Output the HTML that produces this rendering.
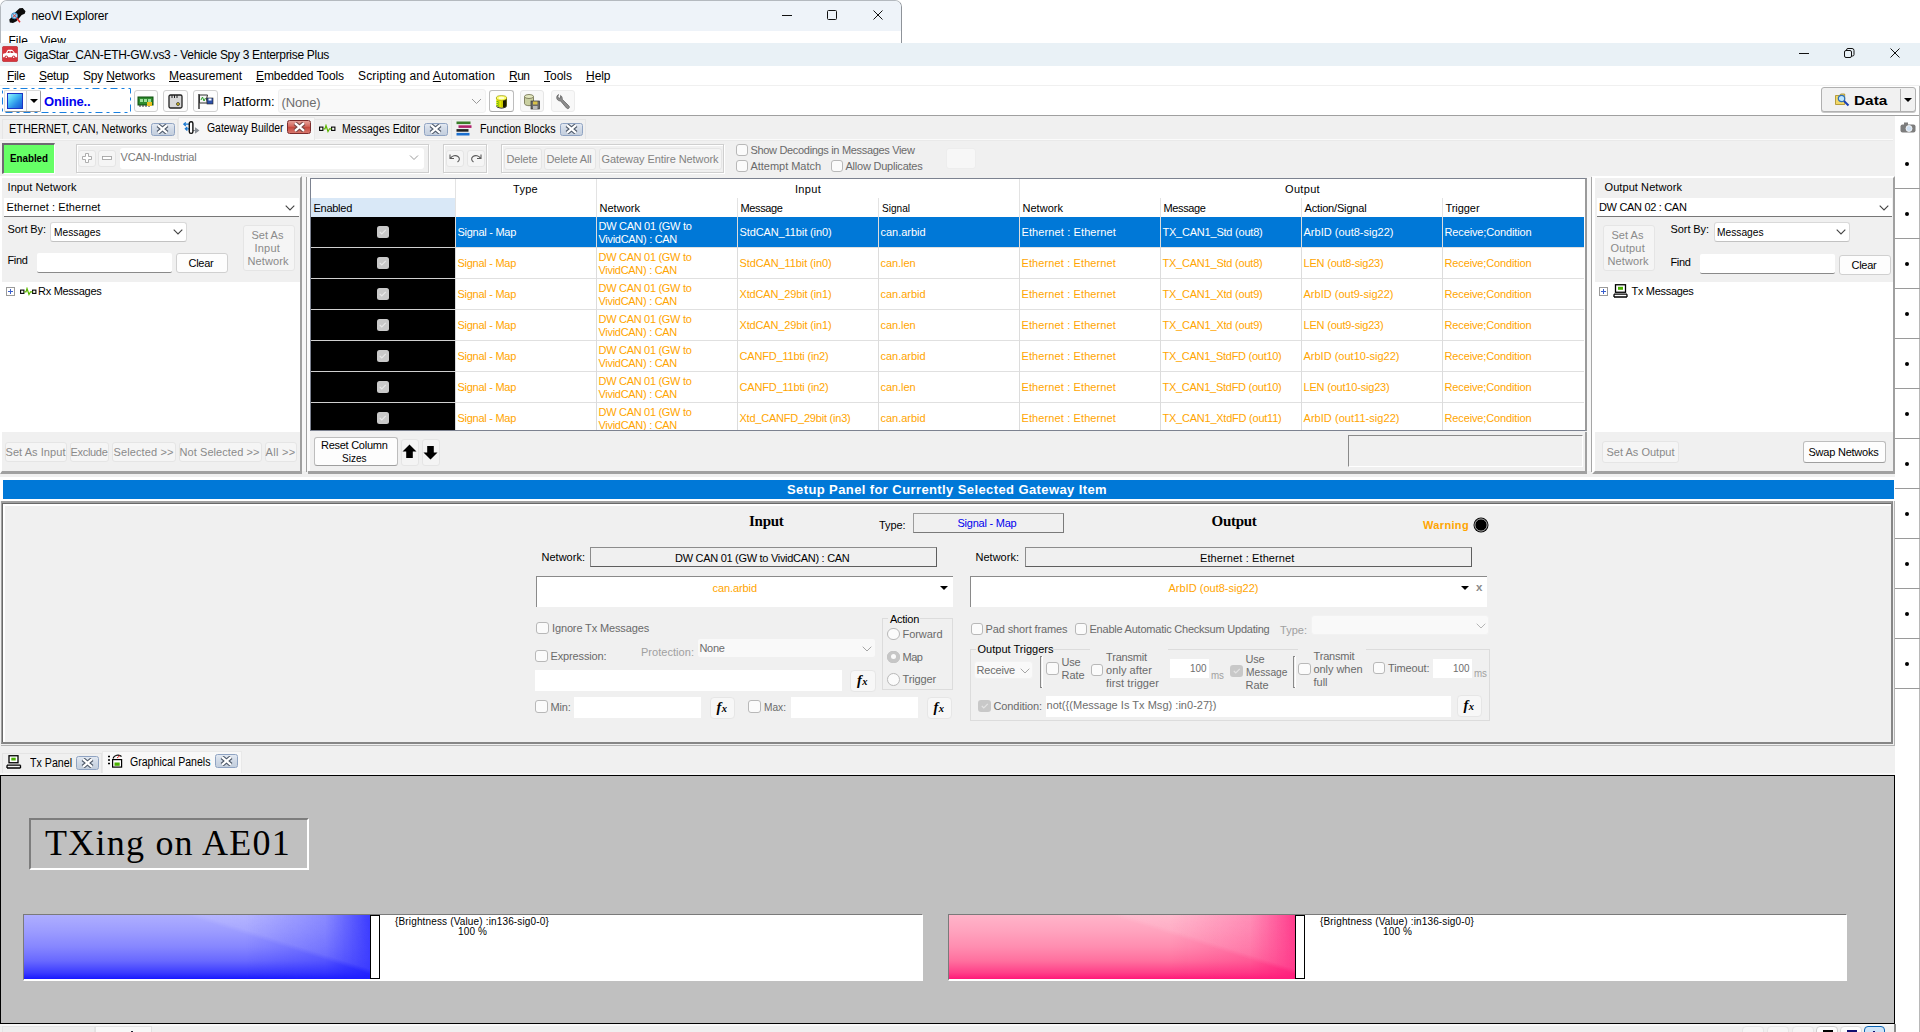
<!DOCTYPE html><html><head><meta charset="utf-8"><title>Vehicle Spy</title><style>
*{box-sizing:border-box;margin:0;padding:0}
html,body{width:1920px;height:1032px;overflow:hidden;background:#fff;font-family:"Liberation Sans",sans-serif}
body{position:relative;font-family:"Liberation Sans",sans-serif;font-size:11px;color:#000;line-height:13px}
.a{position:absolute}
.t{position:absolute;white-space:nowrap}
.btn{position:absolute;background:#fdfdfd;border:1px solid #d0d0d0;border-radius:3px}
.btnd{position:absolute;background:#f5f5f5;border:1px solid #e5e5e5;border-radius:3px}
.cb{position:absolute;width:13px;height:13px;border:1px solid #b8b8b8;border-radius:3px;background:#fbfbfb}
.cbk{position:absolute;width:13px;height:13px;border-radius:3px;background:#c8c8c8}
.rad{position:absolute;width:13px;height:13px;border:1px solid #b8b8b8;border-radius:50%;background:#fbfbfb}
.chev{position:absolute;width:7px;height:7px;border-right:1px solid #444;border-bottom:1px solid #444;transform:rotate(45deg) scale(1,1)}
</style></head><body>
<div class="a" style="left:0;top:0;width:902px;height:50px;background:#fff;border:1px solid #b4b9bf;border-right-color:#8e9399;border-radius:7px 7px 0 0;overflow:hidden"><div class="a" style="left:0;top:0;width:902px;height:30px;background:#eef3f9"></div></div>
<div class="t" style="left:31.5px;top:9px;font-size:12px;line-height:14px;letter-spacing:-0.206px;">neoVI Explorer</div>
<div class="a" style="left:1px;top:31px;width:899px;height:12px;overflow:hidden">
<div class="t" style="left:7.5px;top:3px;font-size:12px;line-height:14px;">File</div>
<div class="t" style="left:39px;top:3px;font-size:12px;line-height:14px;">View</div>
</div>
<svg class="a" style="left:9px;top:7.5px" width="17" height="16" viewBox="0 0 17 16"><path d="M10.5 0.3l3.2-0.3 2.8 3.2-0.8 2.5-3 1.2-5.2 6.3-3.5 1.8-3.2-0.5-0.5-3 3.7-3.5 2-3.5z" fill="#0c0c0c"/><circle cx="5.5" cy="7.8" r="3" fill="#8fd8f6" stroke="#2c86c8" stroke-width="0.9"/><path d="M3.8 6.2l3.4 3.2M7.2 6.2l-3.4 3.2" stroke="#e42a2a" stroke-width="0.9"/><path d="M7.6 10l3.4 4.2" stroke="#e42a2a" stroke-width="1.5"/></svg>
<svg class="a" style="left:770px;top:5px" width="125" height="22" viewBox="0 0 125 22" fill="none" stroke="#111" stroke-width="1"><path d="M12 10.5h10"/><rect x="57.5" y="5.5" width="9" height="9" rx="1"/><path d="M103.5 5.5l9 9M112.5 5.5l-9 9"/></svg>
<div class="a" style="left:0px;top:43px;width:1920px;height:23px;background:#e9f1f6"></div>
<div class="t" style="left:24px;top:48px;font-size:12px;line-height:14px;letter-spacing:-0.299px;">GigaStar_CAN-ETH-GW.vs3 - Vehicle Spy 3 Enterprise Plus</div>
<svg class="a" style="left:2px;top:46px" width="16" height="16" viewBox="0 0 16 16"><rect x="0.3" y="0.3" width="15.4" height="15.4" rx="1.8" fill="#d8353d" stroke="#b02a30" stroke-width="0.6"/><path d="M1 11.3V8.6c0-0.6 0.4-1 1-1.1l2-0.4 1.3-2.6c0.2-0.5 0.6-0.7 1.1-0.7h3.3c0.5 0 0.9 0.2 1.2 0.6l2 2.5 1.4 0.4c0.5 0.1 0.8 0.5 0.8 1v3z" fill="#fff"/><path d="M5.3 7l0.9-1.9h1.5V7zM8.5 5.1h1.7L11.7 7H8.5z" fill="#c4343b"/><circle cx="4.3" cy="11.3" r="1.7" fill="#c4343b"/><circle cx="4.3" cy="11.3" r="0.8" fill="#fff"/><circle cx="11.7" cy="11.3" r="1.7" fill="#c4343b"/><circle cx="11.7" cy="11.3" r="0.8" fill="#fff"/></svg>
<svg class="a" style="left:1790px;top:44px" width="125" height="20" viewBox="0 0 125 20" fill="none" stroke="#111" stroke-width="1"><path d="M9 9.5h10"/><rect x="54.5" y="6.5" width="7" height="7" rx="1.5"/><path d="M56.5 6.3v-0.3a1.5 1.5 0 0 1 1.5-1.5h4a2 2 0 0 1 2 2v4a1.5 1.5 0 0 1-1.5 1.5h-0.8"/><path d="M100.5 4.5l9 9M109.5 4.5l-9 9"/></svg>
<div class="a" style="left:0px;top:66px;width:1920px;height:20px;background:#fff"></div>
<div class="a" style="left:0px;top:85px;width:1920px;height:1px;background:#f0f0f0"></div>
<div class="t" style="left:7px;top:69px;font-size:12px;line-height:14px;letter-spacing:-0.334px;"><u>F</u>ile</div>
<div class="t" style="left:39px;top:69px;font-size:12px;line-height:14px;letter-spacing:-0.372px;"><u>S</u>etup</div>
<div class="t" style="left:83px;top:69px;font-size:12px;line-height:14px;letter-spacing:-0.168px;">Spy <u>N</u>etworks</div>
<div class="t" style="left:169px;top:69px;font-size:12px;line-height:14px;letter-spacing:-0.033px;"><u>M</u>easurement</div>
<div class="t" style="left:256px;top:69px;font-size:12px;line-height:14px;letter-spacing:-0.084px;"><u>E</u>mbedded Tools</div>
<div class="t" style="left:358px;top:69px;font-size:12px;line-height:14px;letter-spacing:0.149px;">Scripting and <u>A</u>utomation</div>
<div class="t" style="left:509px;top:69px;font-size:12px;line-height:14px;letter-spacing:-0.505px;"><u>R</u>un</div>
<div class="t" style="left:544px;top:69px;font-size:12px;line-height:14px;letter-spacing:-0.003px;"><u>T</u>ools</div>
<div class="t" style="left:586px;top:69px;font-size:12px;line-height:14px;letter-spacing:-0.045px;"><u>H</u>elp</div>
<div class="a" style="left:0px;top:86px;width:1920px;height:29px;background:#fff"></div>
<div class="a" style="left:0px;top:115px;width:1920px;height:1px;background:#a0a0a0"></div>
<svg class="a" style="left:2px;top:88px" width="129" height="25" viewBox="0 0 129 25"><rect x="0.5" y="0.5" width="128" height="24" fill="none" stroke="#1880e0" stroke-width="1" stroke-dasharray="7 4 3 4"/></svg>
<div class="a" style="left:3.5px;top:89.5px;width:37.5px;height:22px;border:1px solid #d9d9d9;border-right-color:#9a9a9a;border-bottom-color:#9a9a9a;border-radius:2px;background:#fdfdfd"></div>
<div class="a" style="left:7px;top:93px;width:16px;height:15.5px;background:linear-gradient(135deg,#9af0ff 0%,#4cc4f4 35%,#2a8be8 65%,#1858d8 100%);border:1.5px solid #1a35c4"></div>
<div class="a" style="left:26px;top:91px;width:1px;height:20px;background:#d0d0d0"></div>
<div class="a" style="left:30px;top:99px;width:0;height:0;border-left:4px solid transparent;border-right:4px solid transparent;border-top:4px solid #000"></div>
<div class="t" style="left:44px;top:94px;font-size:13px;line-height:15px;font-weight:bold;color:#0000f0;letter-spacing:-0.146px;">Online..</div>
<div class="btn" style="left:133.5px;top:90px;width:24.5px;height:22px;"></div>
<div class="btn" style="left:163px;top:90px;width:24.5px;height:22px;"></div>
<div class="btn" style="left:193px;top:90px;width:24.5px;height:22px;"></div>
<svg class="a" style="left:137px;top:95px" width="18" height="13" viewBox="0 0 18 13"><rect x="1" y="2" width="15" height="8" fill="#2e8b2e" stroke="#0b4d0b"/><path d="M3 4h3v3H3zM7 4h3v3H7zM11 4h3v3h-3z" fill="#9be09b"/><path d="M3 10v2M6 10v2M9 10v2M12 10v2" stroke="#333"/><rect x="10" y="7" width="5" height="4" fill="#e8c020"/></svg>
<svg class="a" style="left:168px;top:94px" width="15" height="15" viewBox="0 0 15 15"><rect x="1" y="1" width="13" height="13" rx="1.5" fill="#d9d9d9" stroke="#222" stroke-width="1.3"/><path d="M4 1v3M6.5 1v3M9 1v3" stroke="#222"/><circle cx="10" cy="10" r="1.5" fill="#d8c020" stroke="#222" stroke-width="0.7"/></svg>
<svg class="a" style="left:197px;top:93px" width="18" height="17" viewBox="0 0 18 17"><path d="M2 1v15" stroke="#333" stroke-width="1.5"/><path d="M2.5 2h8l-1 4 1 4h-8z" fill="#f4f4f4" stroke="#333"/><path d="M4 7l1.5-3 1.5 4 1.5-3" stroke="#2a9d2a" fill="none"/><rect x="10" y="5" width="6" height="6" fill="#2b4fa8" stroke="#222" stroke-width="0.6"/><rect x="11.5" y="5.5" width="3" height="2" fill="#fff"/></svg>
<div class="t" style="left:223px;top:94px;font-size:13px;line-height:15px;letter-spacing:-0.057px;">Platform:</div>
<div class="a" style="left:277.5px;top:89px;width:208px;height:24px;background:#f9f9f9;border:1px solid #f0f0f0;border-radius:3px"></div>
<div class="t" style="left:281.5px;top:95px;font-size:13px;line-height:15px;color:#6d6d6d;letter-spacing:-0.123px;">(None)</div>
<svg class="a" style="left:471px;top:98px" width="11" height="7" viewBox="0 0 11 7"><path d="M1 1l4.5 4.5L10 1" fill="none" stroke="#9a9a9a" stroke-width="1"/></svg>
<div class="btn" style="left:489px;top:90px;width:24.5px;height:22px;border-color:#bdbdbd;border-bottom-color:#a8a8a8"></div>
<div class="btn" style="left:519.5px;top:90px;width:24px;height:22px;border-color:#e6e6e6;background:#f8f8f8"></div>
<div class="btn" style="left:550.5px;top:90px;width:24px;height:22px;border-color:#ececec;background:#f8f8f8"></div>
<svg class="a" style="left:494px;top:94px" width="15" height="15" viewBox="0 0 15 15"><path d="M2.3 4v7c0 1.5 2.3 2.7 5.2 2.7s5.2-1.2 5.2-2.7V4z" fill="#e6e600"/><path d="M9 5.5v8.1c2.2-0.3 3.7-1.3 3.7-2.6V4.5z" fill="#1a1a00"/><path d="M7.5 13.7c-2.9 0-5.2-1.2-5.2-2.7v1c0 1.5 2.3 2.5 5.2 2.5s5.2-1 5.2-2.5v-1c0 1.5-2.3 2.7-5.2 2.7z" fill="#000"/><ellipse cx="7.5" cy="4" rx="5.2" ry="2.4" fill="#ffff66" stroke="#8a8a00" stroke-width="0.6"/><ellipse cx="7.5" cy="4" rx="3" ry="1.2" fill="#ffffd0"/><path d="M3.2 7v5M4.7 7.6v5.2" stroke="#1c9a1c" stroke-width="0.9" stroke-dasharray="1 1"/><path d="M8 7.5v5.5" stroke="#6a6a00" stroke-width="0.8" stroke-dasharray="1 1"/></svg>
<svg class="a" style="left:523px;top:93px" width="18" height="17" viewBox="0 0 18 17"><path d="M1.5 3.5v7c0 1.2 2 2.2 4.5 2.2s4.5-1 4.5-2.2v-7" fill="#c9cfa0" stroke="#6b6b4a" stroke-width="0.8"/><ellipse cx="6" cy="3.5" rx="4.5" ry="2" fill="#e4e8c0" stroke="#6b6b4a" stroke-width="0.8"/><rect x="8" y="8" width="8.5" height="8" fill="#6a6a6a" stroke="#333" stroke-width="0.7"/><rect x="10" y="8.5" width="4.5" height="3" fill="#d9c24a"/><rect x="10" y="13" width="4.5" height="3" fill="#bbb"/></svg>
<svg class="a" style="left:555px;top:93px" width="16" height="17" viewBox="0 0 16 17"><path d="M3.5 1.5c-1.5 0.8-2.2 2.6-1.6 4.3 0.6 1.5 2.1 2.3 3.6 2.1l6 7.1c0.7 0.8 1.8 0.8 2.4 0.2 0.7-0.7 0.6-1.7-0.1-2.4L7.2 6.3c0.3-1.4-0.3-3-1.6-3.9L5.5 5 3.6 5.3 2.9 3.6z" fill="#8d8d8d" stroke="#5a5a5a" stroke-width="0.7"/></svg>
<div class="a" style="left:1820.6px;top:87px;width:95.8px;height:24.8px;background:#f1f1f1;border:1px solid #b0b0b0;border-radius:3px;box-shadow:0 1px 0 #c8c8c8"></div>
<div class="a" style="left:1900px;top:88.5px;width:1px;height:22.5px;background:#b0b0b0"></div>
<div class="t" style="left:1854.2px;top:92.6px;font-size:13px;line-height:15px;font-weight:bold;transform:scaleX(1.1818);transform-origin:0 0;">Data</div>
<div class="a" style="left:1904px;top:98px;width:0;height:0;border-left:4px solid transparent;border-right:4px solid transparent;border-top:4px solid #000"></div>
<svg class="a" style="left:1835px;top:92.3px" width="16" height="15" viewBox="0 0 16 15"><path d="M0.5 3.5h4l1.2-1.5h4v10.5h-9.2z" fill="#f2d86a" stroke="#a88a20" stroke-width="0.8"/><circle cx="6.5" cy="6.5" r="3.2" fill="#bfe6ff" stroke="#2f6fb5" stroke-width="1.2"/><path d="M9 9l4.5 4.5" stroke="#1a3fb0" stroke-width="2"/></svg>
<div class="a" style="left:0px;top:116px;width:1895px;height:916px;background:#f0f0f0"></div>
<div class="a" style="left:1895px;top:116px;width:25px;height:916px;background:#fff"></div>
<div class="a" style="left:1919px;top:86px;width:1px;height:946px;background:#b8b8b8"></div>
<div class="a" style="left:0px;top:139px;width:1893px;height:1px;background:#fbfbfb"></div>
<div class="a" style="left:2px;top:119px;width:176px;height:20px;background:#f0f0f0;border:1px solid #e6e6e6;border-bottom:none"></div>
<div class="a" style="left:178px;top:117px;width:137px;height:23px;background:#f7f7f7;border:1px solid #e9e9e9;border-bottom:none"></div>
<div class="a" style="left:315px;top:119px;width:137px;height:20px;background:#f0f0f0;border:1px solid #e6e6e6;border-bottom:none;border-left:none"></div>
<div class="a" style="left:452px;top:119px;width:134px;height:20px;background:#f0f0f0;border:1px solid #e6e6e6;border-bottom:none;border-left:none"></div>
<div class="t" style="left:9px;top:121.5px;font-size:12.5px;line-height:14.5px;transform:scaleX(0.8715);transform-origin:0 0;">ETHERNET, CAN, Networks</div>
<div class="a" style="left:151px;top:122.5px;width:23.5px;height:13px;background:linear-gradient(#e2e8f1 0%,#d0d9e6 50%,#c3cedd 100%);border:1px solid #8fa3c2;border-radius:2.5px"></div>
<svg class="a" style="left:156.25px;top:124px" width="13" height="10" viewBox="0 0 13 10"><path d="M2 1.2l9 7.6M11 1.2l-9 7.6" stroke="#4f5a6a" stroke-width="4.4"/><path d="M2 1.2l9 7.6M11 1.2l-9 7.6" stroke="#fff" stroke-width="2.2"/></svg>
<div class="t" style="left:206.5px;top:120.5px;font-size:12.5px;line-height:14.5px;transform:scaleX(0.8341);transform-origin:0 0;">Gateway Builder</div>
<div class="a" style="left:287px;top:120px;width:24px;height:13.5px;background:linear-gradient(#e6a098 0%,#d4675c 45%,#c4463a 50%,#d8766c 100%);border:1px solid #7c2c2c;border-radius:2.5px"></div>
<svg class="a" style="left:292.5px;top:121.75px" width="13" height="10" viewBox="0 0 13 10"><path d="M2 1.2l9 7.6M11 1.2l-9 7.6" stroke="#7a4a48" stroke-width="4.4"/><path d="M2 1.2l9 7.6M11 1.2l-9 7.6" stroke="#fff" stroke-width="2.2"/></svg>
<div class="t" style="left:342px;top:121.5px;font-size:12.5px;line-height:14.5px;transform:scaleX(0.8378);transform-origin:0 0;">Messages Editor</div>
<div class="a" style="left:424px;top:122.5px;width:23.5px;height:13px;background:linear-gradient(#e2e8f1 0%,#d0d9e6 50%,#c3cedd 100%);border:1px solid #8fa3c2;border-radius:2.5px"></div>
<svg class="a" style="left:429.25px;top:124px" width="13" height="10" viewBox="0 0 13 10"><path d="M2 1.2l9 7.6M11 1.2l-9 7.6" stroke="#4f5a6a" stroke-width="4.4"/><path d="M2 1.2l9 7.6M11 1.2l-9 7.6" stroke="#fff" stroke-width="2.2"/></svg>
<div class="t" style="left:479.5px;top:121.5px;font-size:12.5px;line-height:14.5px;transform:scaleX(0.8557);transform-origin:0 0;">Function Blocks</div>
<div class="a" style="left:559.5px;top:122.5px;width:23px;height:13px;background:linear-gradient(#e2e8f1 0%,#d0d9e6 50%,#c3cedd 100%);border:1px solid #8fa3c2;border-radius:2.5px"></div>
<svg class="a" style="left:564.5px;top:124px" width="13" height="10" viewBox="0 0 13 10"><path d="M2 1.2l9 7.6M11 1.2l-9 7.6" stroke="#4f5a6a" stroke-width="4.4"/><path d="M2 1.2l9 7.6M11 1.2l-9 7.6" stroke="#fff" stroke-width="2.2"/></svg>
<svg class="a" style="left:183px;top:120.5px" width="17" height="14" viewBox="0 0 17 14"><path d="M0.8 3.2h5.5M2.8 1.4l-2 1.8 2 1.8" stroke="#1a78d0" stroke-width="1.2" fill="none"/><path d="M2.3 7.8h4M4.3 6l-2 1.8 2 1.8" stroke="#1a78d0" stroke-width="1.2" fill="none"/><path d="M10 9.5h5M12.5 7.3l3 2.2-3 2.2z" stroke="#8a8f96" stroke-width="1.1" fill="#8a8f96"/><rect x="6.3" y="0.8" width="3.6" height="11.6" rx="1.7" fill="#fff" stroke="#111" stroke-width="1.4"/></svg>
<svg class="a" style="left:318.5px;top:123.5px" width="17" height="9" viewBox="0 0 17 9"><rect x="0.6" y="3.1" width="3.3" height="3.3" fill="#fff" stroke="#000" stroke-width="1.1"/><rect x="12.6" y="3.1" width="3.3" height="3.3" fill="#fff" stroke="#000" stroke-width="1.1"/><path d="M4.3 4.8h1.7l1-3.3 2 6 1.5-2.7h2" fill="none" stroke="#5cb800" stroke-width="1.2"/></svg>
<svg class="a" style="left:456px;top:121px" width="16" height="15" viewBox="0 0 16 15"><rect x="0.5" y="0.5" width="14" height="2.6" fill="#3b7d2a"/><rect x="2.5" y="4.3" width="13" height="2.6" fill="#b0206a"/><rect x="0.5" y="8.1" width="12" height="2.6" fill="#222"/><rect x="0.5" y="11.9" width="13" height="2.6" fill="#1a6fd0"/></svg>
<svg class="a" style="left:1900px;top:122px" width="16" height="11" viewBox="0 0 16 11"><rect x="0.5" y="2.5" width="15" height="8" rx="2" fill="#7d7d7d"/><rect x="4" y="0.5" width="4" height="3" fill="#7d7d7d"/><circle cx="9" cy="6.5" r="3" fill="#cfe0f2" stroke="#fff" stroke-width="0.8"/></svg>
<div class="a" style="left:0px;top:140px;width:1893px;height:1px;background:#e9e9e9"></div>
<div class="a" style="left:2.2px;top:143px;width:52.4px;height:30.8px;background:#66ff66;border-style:solid;border-color:#6e6a72 #fff #fff #6e6a72;border-width:2px 1.5px 1.5px 2px"></div>
<div class="t" style="left:9.5px;top:152px;font-weight:bold;transform:scaleX(0.8881);transform-origin:0 0;">Enabled</div>
<div class="a" style="left:75.5px;top:143.5px;width:353px;height:29.5px;border:1px solid #cfcfcf;box-shadow:inset 1px 1px 0 #fff, 1px 1px 0 #fff"></div>
<div class="btnd" style="left:78px;top:150px;width:17.5px;height:16.5px;"></div>
<div class="btnd" style="left:98px;top:150px;width:17.5px;height:16.5px;"></div>
<svg class="a" style="left:82px;top:153px" width="10" height="10" viewBox="0 0 10 10"><path d="M3.5 0.5h3v3h3v3h-3v3h-3v-3h-3v-3h3z" fill="#fff" stroke="#a5a5a5" stroke-width="0.9"/></svg>
<svg class="a" style="left:102px;top:156px" width="10" height="4" viewBox="0 0 10 4"><rect x="0.5" y="0.5" width="9" height="3" fill="#fff" stroke="#a5a5a5" stroke-width="0.9"/></svg>
<div class="a" style="left:120px;top:148px;width:304px;height:21px;background:#fff;border-radius:3px"></div>
<div class="t" style="left:120.5px;top:151px;color:#7a7a7a;letter-spacing:-0.191px;">VCAN-Industrial</div>
<svg class="a" style="left:409px;top:155px" width="10" height="6" viewBox="0 0 10 6"><path d="M1 0.5l4 4 4-4" fill="none" stroke="#9a9a9a"/></svg>
<div class="a" style="left:443px;top:143.5px;width:44px;height:29.5px;border:1px solid #cfcfcf;box-shadow:inset 1px 1px 0 #fff, 1px 1px 0 #fff"></div>
<div class="btnd" style="left:445.5px;top:150px;width:18.5px;height:16.5px;"></div>
<div class="btnd" style="left:466.5px;top:150px;width:18.5px;height:16.5px;"></div>
<svg class="a" style="left:449px;top:153px" width="12" height="10" viewBox="0 0 12 10"><path d="M1 1.5v4h4M1.5 5.3C3 2.8 6.5 1.8 9 3.5c2 1.5 1.8 4-0.5 5.5" fill="none" stroke="#5a5a5a" stroke-width="1.1"/></svg>
<svg class="a" style="left:470px;top:153px" width="12" height="10" viewBox="0 0 12 10"><path d="M11 1.5v4H7M10.5 5.3C9 2.8 5.5 1.8 3 3.5c-2 1.5-1.8 4 0.5 5.5" fill="none" stroke="#5a5a5a" stroke-width="1.1"/></svg>
<div class="a" style="left:501px;top:143.5px;width:223px;height:29.5px;border:1px solid #cfcfcf;box-shadow:inset 1px 1px 0 #fff, 1px 1px 0 #fff"></div>
<div class="btnd" style="left:503.5px;top:148px;width:38px;height:21.5px;"></div>
<div class="t" style="left:506.5px;top:152.5px;color:#838383;letter-spacing:-0.133px;">Delete</div>
<div class="btnd" style="left:543.5px;top:148px;width:52px;height:21.5px;"></div>
<div class="t" style="left:546.5px;top:152.5px;color:#838383;letter-spacing:-0.147px;">Delete All</div>
<div class="btnd" style="left:598.5px;top:148px;width:123px;height:21.5px;"></div>
<div class="t" style="left:601.5px;top:152.5px;color:#838383;letter-spacing:-0.073px;">Gateway Entire Network</div>
<div class="cb" style="left:735.5px;top:144px;width:12.5px;height:12px;"></div>
<div class="t" style="left:750.5px;top:143.5px;color:#6a6a6a;letter-spacing:-0.324px;">Show Decodings in Messages View</div>
<div class="cb" style="left:735.5px;top:160px;width:12.5px;height:12px;"></div>
<div class="t" style="left:750.5px;top:159.5px;color:#6a6a6a;letter-spacing:-0.032px;">Attempt Match</div>
<div class="cb" style="left:830.5px;top:160px;width:12.5px;height:12px;"></div>
<div class="t" style="left:845.5px;top:159.5px;color:#6a6a6a;letter-spacing:-0.231px;">Allow Duplicates</div>
<div class="a" style="left:946px;top:147.5px;width:29.5px;height:21.5px;background:#f7f7f7;border:1px solid #ededed;border-radius:3px"></div>
<div class="a" style="left:0px;top:176px;width:302px;height:298px;background:#f0f0f0;border-style:solid;border-color:#fff #a0a0a0 #a0a0a0 #fff;border-width:2px 2px 3px 2px"></div>
<div class="a" style="left:302px;top:177px;width:3.5px;height:294px;background:#f7f7f7"></div>
<div class="a" style="left:305.5px;top:177px;width:1.3px;height:295px;background:#a0a0a0"></div>
<div class="a" style="left:306.8px;top:177px;width:3.2px;height:294px;background:#fbfbfb"></div>
<div class="t" style="left:7.5px;top:181px;letter-spacing:0.087px;">Input Network</div>
<div class="a" style="left:4px;top:197.5px;width:295px;height:19.5px;background:#fff;border-bottom:1px solid #777"></div>
<div class="t" style="left:6.5px;top:201px;letter-spacing:0.088px;">Ethernet : Ethernet</div>
<svg class="a" style="left:285px;top:204.5px" width="10" height="6" viewBox="0 0 10 6"><path d="M0.7 0.7l4.3 4.3 4.3-4.3" fill="none" stroke="#444" stroke-width="1.1"/></svg>
<div class="t" style="left:7.5px;top:223px;letter-spacing:-0.078px;">Sort By:</div>
<div class="a" style="left:50px;top:221.5px;width:136.5px;height:20.5px;background:#fff;border:1px solid #d9d9d9;border-bottom-color:#c2c2c2;border-radius:3px"></div>
<div class="t" style="left:53.5px;top:225.5px;transform:scaleX(0.9275);transform-origin:0 0;">Messages</div>
<svg class="a" style="left:173px;top:228.5px" width="10" height="6" viewBox="0 0 10 6"><path d="M0.7 0.7l4.3 4.3 4.3-4.3" fill="none" stroke="#444" stroke-width="1.1"/></svg>
<div class="btnd" style="left:243px;top:225px;width:51.5px;height:46px;"></div>
<div class="t" style="left:251.5px;top:229px;color:#8a8a8a;letter-spacing:0.034px;">Set As</div>
<div class="t" style="left:254.5px;top:242px;color:#8a8a8a;letter-spacing:0.207px;">Input</div>
<div class="t" style="left:247.5px;top:255px;color:#8a8a8a;letter-spacing:0.094px;">Network</div>
<div class="t" style="left:7.5px;top:254px;letter-spacing:-0.35px;">Find</div>
<div class="a" style="left:37px;top:252.5px;width:135px;height:20px;background:#fff;border-bottom:1px solid #8a8a8a;border-radius:2px"></div>
<div class="btn" style="left:176px;top:253px;width:51.5px;height:19.5px;"></div>
<div class="t" style="left:188.5px;top:256.5px;letter-spacing:-0.257px;">Clear</div>
<div class="a" style="left:2px;top:282px;width:298px;height:150px;background:#fff"></div>
<svg class="a" style="left:6px;top:286.5px" width="9" height="9" viewBox="0 0 9 9"><rect x="0.5" y="0.5" width="8" height="8" fill="#fff" stroke="#9a9a9a"/><path d="M2 4.5h5M4.5 2v5" stroke="#3a5fcd" stroke-width="1"/></svg>
<svg class="a" style="left:20px;top:287px" width="17" height="9" viewBox="0 0 17 9"><rect x="0.6" y="3.1" width="3.3" height="3.3" fill="#fff" stroke="#000" stroke-width="1.1"/><rect x="12.6" y="3.1" width="3.3" height="3.3" fill="#fff" stroke="#000" stroke-width="1.1"/><path d="M4.3 4.8h1.7l1-3.3 2 6 1.5-2.7h2" fill="none" stroke="#5cb800" stroke-width="1.2"/></svg>
<div class="t" style="left:38px;top:285px;letter-spacing:-0.285px;">Rx Messages</div>
<div class="btnd" style="left:5px;top:442px;width:62px;height:20px;"></div>
<div class="t" style="left:5.5px;top:445.5px;color:#8a8a8a;letter-spacing:0.057px;">Set As Input</div>
<div class="btnd" style="left:70px;top:442px;width:39px;height:20px;"></div>
<div class="t" style="left:70.5px;top:445.5px;color:#8a8a8a;letter-spacing:-0.305px;">Exclude</div>
<div class="btnd" style="left:112px;top:442px;width:64px;height:20px;"></div>
<div class="t" style="left:113.5px;top:445.5px;color:#8a8a8a;letter-spacing:0.117px;">Selected &gt;&gt;</div>
<div class="btnd" style="left:179px;top:442px;width:82.5px;height:20px;"></div>
<div class="t" style="left:179.5px;top:445.5px;color:#8a8a8a;letter-spacing:0.074px;">Not Selected &gt;&gt;</div>
<div class="btnd" style="left:265px;top:442px;width:31.5px;height:20px;"></div>
<div class="t" style="left:265.5px;top:445.5px;color:#8a8a8a;letter-spacing:0.312px;">All &gt;&gt;</div>
<div class="a" style="left:310px;top:178px;width:1277px;height:253px;background:#fff;border:1px solid #7c8290;border-right:2px solid #9a9a9a"></div>
<div class="a" style="left:308px;top:432px;width:1279px;height:42px;border-right:2px solid #a0a0a0;border-bottom:3px solid #a0a0a0"></div>
<div class="a" style="left:311px;top:198px;width:144.5px;height:19px;background:#d9e8f7"></div>
<div class="t" style="left:313.5px;top:201.5px;letter-spacing:-0.267px;">Enabled</div>
<div class="t" style="left:513px;top:182.5px;letter-spacing:0.288px;">Type</div>
<div class="t" style="left:795px;top:182.5px;letter-spacing:0.307px;">Input</div>
<div class="t" style="left:1285px;top:182.5px;letter-spacing:0.33px;">Output</div>
<div class="t" style="left:599.5px;top:201.5px;letter-spacing:0.022px;">Network</div>
<div class="t" style="left:740.5px;top:201.5px;letter-spacing:-0.376px;">Message</div>
<div class="t" style="left:881.5px;top:201.5px;transform:scaleX(0.9157);transform-origin:0 0;">Signal</div>
<div class="t" style="left:1022.5px;top:201.5px;letter-spacing:0.022px;">Network</div>
<div class="t" style="left:1163.5px;top:201.5px;letter-spacing:-0.376px;">Message</div>
<div class="t" style="left:1304.5px;top:201.5px;letter-spacing:-0.17px;">Action/Signal</div>
<div class="t" style="left:1445.5px;top:201.5px;letter-spacing:-0.062px;">Trigger</div>
<div class="a" style="left:455px;top:179px;width:1px;height:38px;background:#e3e3e3"></div>
<div class="a" style="left:596px;top:179px;width:1px;height:38px;background:#e3e3e3"></div>
<div class="a" style="left:1019px;top:179px;width:1px;height:38px;background:#e3e3e3"></div>
<div class="a" style="left:737px;top:198px;width:1px;height:19px;background:#e3e3e3"></div>
<div class="a" style="left:878px;top:198px;width:1px;height:19px;background:#e3e3e3"></div>
<div class="a" style="left:1160px;top:198px;width:1px;height:19px;background:#e3e3e3"></div>
<div class="a" style="left:1301px;top:198px;width:1px;height:19px;background:#e3e3e3"></div>
<div class="a" style="left:1442px;top:198px;width:1px;height:19px;background:#e3e3e3"></div>
<div class="a" style="left:311px;top:217px;width:1273px;height:213px;overflow:hidden">
<div class="a" style="left:0px;top:0px;width:144.5px;height:30px;background:#000"></div>
<div class="a" style="left:65.5px;top:9px;width:12px;height:12px;background:#c9c9c9;border-radius:2.5px"></div>
<svg class="a" style="left:68px;top:12px" width="8" height="6" viewBox="0 0 8 6"><path d="M0.8 3l2 2 4-4.2" fill="none" stroke="#e9e9e9" stroke-width="1.1"/></svg>
<div class="a" style="left:144.5px;top:0px;width:1128px;height:30px;background:#0078d7"></div>
<div class="a" style="left:0px;top:30px;width:144.5px;height:1px;background:#d0d0d0"></div>
<div class="a" style="left:144.5px;top:30px;width:1128.5px;height:1px;background:#e0e0e0"></div>
<div class="t" style="left:146.5px;top:8.5px;color:#fff;letter-spacing:-0.271px;">Signal - Map</div>
<div class="t" style="left:287.5px;top:2.5px;color:#fff;letter-spacing:-0.299px;">DW CAN 01 (GW to</div>
<div class="t" style="left:287.5px;top:15.5px;color:#fff;letter-spacing:-0.295px;">VividCAN) : CAN</div>
<div class="t" style="left:428.5px;top:8.5px;color:#fff;letter-spacing:-0.108px;">StdCAN_11bit (in0)</div>
<div class="t" style="left:569.5px;top:8.5px;color:#fff;letter-spacing:-0.028px;">can.arbid</div>
<div class="t" style="left:710.5px;top:8.5px;color:#fff;letter-spacing:0.114px;">Ethernet : Ethernet</div>
<div class="t" style="left:851.5px;top:8.5px;color:#fff;letter-spacing:-0.219px;">TX_CAN1_Std (out8)</div>
<div class="t" style="left:992.5px;top:8.5px;color:#fff;letter-spacing:0.007px;">ArbID (out8-sig22)</div>
<div class="t" style="left:1133.5px;top:8.5px;color:#fff;letter-spacing:-0.134px;">Receive;Condition</div>
<div class="a" style="left:0px;top:31px;width:144.5px;height:30px;background:#000"></div>
<div class="a" style="left:65.5px;top:40px;width:12px;height:12px;background:#c9c9c9;border-radius:2.5px"></div>
<svg class="a" style="left:68px;top:43px" width="8" height="6" viewBox="0 0 8 6"><path d="M0.8 3l2 2 4-4.2" fill="none" stroke="#e9e9e9" stroke-width="1.1"/></svg>
<div class="a" style="left:0px;top:61px;width:144.5px;height:1px;background:#d0d0d0"></div>
<div class="a" style="left:144.5px;top:61px;width:1128.5px;height:1px;background:#e0e0e0"></div>
<div class="t" style="left:146.5px;top:39.5px;color:#ffa500;letter-spacing:-0.271px;">Signal - Map</div>
<div class="t" style="left:287.5px;top:33.5px;color:#ffa500;letter-spacing:-0.299px;">DW CAN 01 (GW to</div>
<div class="t" style="left:287.5px;top:46.5px;color:#ffa500;letter-spacing:-0.295px;">VividCAN) : CAN</div>
<div class="t" style="left:428.5px;top:39.5px;color:#ffa500;letter-spacing:-0.108px;">StdCAN_11bit (in0)</div>
<div class="t" style="left:569.5px;top:39.5px;color:#ffa500;letter-spacing:-0.067px;">can.len</div>
<div class="t" style="left:710.5px;top:39.5px;color:#ffa500;letter-spacing:0.114px;">Ethernet : Ethernet</div>
<div class="t" style="left:851.5px;top:39.5px;color:#ffa500;letter-spacing:-0.219px;">TX_CAN1_Std (out8)</div>
<div class="t" style="left:992.5px;top:39.5px;color:#ffa500;letter-spacing:-0.197px;">LEN (out8-sig23)</div>
<div class="t" style="left:1133.5px;top:39.5px;color:#ffa500;letter-spacing:-0.134px;">Receive;Condition</div>
<div class="a" style="left:0px;top:62px;width:144.5px;height:30px;background:#000"></div>
<div class="a" style="left:65.5px;top:71px;width:12px;height:12px;background:#c9c9c9;border-radius:2.5px"></div>
<svg class="a" style="left:68px;top:74px" width="8" height="6" viewBox="0 0 8 6"><path d="M0.8 3l2 2 4-4.2" fill="none" stroke="#e9e9e9" stroke-width="1.1"/></svg>
<div class="a" style="left:0px;top:92px;width:144.5px;height:1px;background:#d0d0d0"></div>
<div class="a" style="left:144.5px;top:92px;width:1128.5px;height:1px;background:#e0e0e0"></div>
<div class="t" style="left:146.5px;top:70.5px;color:#ffa500;letter-spacing:-0.271px;">Signal - Map</div>
<div class="t" style="left:287.5px;top:64.5px;color:#ffa500;letter-spacing:-0.299px;">DW CAN 01 (GW to</div>
<div class="t" style="left:287.5px;top:77.5px;color:#ffa500;letter-spacing:-0.295px;">VividCAN) : CAN</div>
<div class="t" style="left:428.5px;top:70.5px;color:#ffa500;letter-spacing:-0.154px;">XtdCAN_29bit (in1)</div>
<div class="t" style="left:569.5px;top:70.5px;color:#ffa500;letter-spacing:-0.028px;">can.arbid</div>
<div class="t" style="left:710.5px;top:70.5px;color:#ffa500;letter-spacing:0.114px;">Ethernet : Ethernet</div>
<div class="t" style="left:851.5px;top:70.5px;color:#ffa500;letter-spacing:-0.219px;">TX_CAN1_Xtd (out9)</div>
<div class="t" style="left:992.5px;top:70.5px;color:#ffa500;letter-spacing:0.007px;">ArbID (out9-sig22)</div>
<div class="t" style="left:1133.5px;top:70.5px;color:#ffa500;letter-spacing:-0.134px;">Receive;Condition</div>
<div class="a" style="left:0px;top:93px;width:144.5px;height:30px;background:#000"></div>
<div class="a" style="left:65.5px;top:102px;width:12px;height:12px;background:#c9c9c9;border-radius:2.5px"></div>
<svg class="a" style="left:68px;top:105px" width="8" height="6" viewBox="0 0 8 6"><path d="M0.8 3l2 2 4-4.2" fill="none" stroke="#e9e9e9" stroke-width="1.1"/></svg>
<div class="a" style="left:0px;top:123px;width:144.5px;height:1px;background:#d0d0d0"></div>
<div class="a" style="left:144.5px;top:123px;width:1128.5px;height:1px;background:#e0e0e0"></div>
<div class="t" style="left:146.5px;top:101.5px;color:#ffa500;letter-spacing:-0.271px;">Signal - Map</div>
<div class="t" style="left:287.5px;top:95.5px;color:#ffa500;letter-spacing:-0.299px;">DW CAN 01 (GW to</div>
<div class="t" style="left:287.5px;top:108.5px;color:#ffa500;letter-spacing:-0.295px;">VividCAN) : CAN</div>
<div class="t" style="left:428.5px;top:101.5px;color:#ffa500;letter-spacing:-0.154px;">XtdCAN_29bit (in1)</div>
<div class="t" style="left:569.5px;top:101.5px;color:#ffa500;letter-spacing:-0.067px;">can.len</div>
<div class="t" style="left:710.5px;top:101.5px;color:#ffa500;letter-spacing:0.114px;">Ethernet : Ethernet</div>
<div class="t" style="left:851.5px;top:101.5px;color:#ffa500;letter-spacing:-0.219px;">TX_CAN1_Xtd (out9)</div>
<div class="t" style="left:992.5px;top:101.5px;color:#ffa500;letter-spacing:-0.197px;">LEN (out9-sig23)</div>
<div class="t" style="left:1133.5px;top:101.5px;color:#ffa500;letter-spacing:-0.134px;">Receive;Condition</div>
<div class="a" style="left:0px;top:124px;width:144.5px;height:30px;background:#000"></div>
<div class="a" style="left:65.5px;top:133px;width:12px;height:12px;background:#c9c9c9;border-radius:2.5px"></div>
<svg class="a" style="left:68px;top:136px" width="8" height="6" viewBox="0 0 8 6"><path d="M0.8 3l2 2 4-4.2" fill="none" stroke="#e9e9e9" stroke-width="1.1"/></svg>
<div class="a" style="left:0px;top:154px;width:144.5px;height:1px;background:#d0d0d0"></div>
<div class="a" style="left:144.5px;top:154px;width:1128.5px;height:1px;background:#e0e0e0"></div>
<div class="t" style="left:146.5px;top:132.5px;color:#ffa500;letter-spacing:-0.271px;">Signal - Map</div>
<div class="t" style="left:287.5px;top:126.5px;color:#ffa500;letter-spacing:-0.299px;">DW CAN 01 (GW to</div>
<div class="t" style="left:287.5px;top:139.5px;color:#ffa500;letter-spacing:-0.295px;">VividCAN) : CAN</div>
<div class="t" style="left:428.5px;top:132.5px;color:#ffa500;letter-spacing:-0.183px;">CANFD_11bti (in2)</div>
<div class="t" style="left:569.5px;top:132.5px;color:#ffa500;letter-spacing:-0.028px;">can.arbid</div>
<div class="t" style="left:710.5px;top:132.5px;color:#ffa500;letter-spacing:0.114px;">Ethernet : Ethernet</div>
<div class="t" style="left:851.5px;top:132.5px;color:#ffa500;letter-spacing:-0.272px;">TX_CAN1_StdFD (out10)</div>
<div class="t" style="left:992.5px;top:132.5px;color:#ffa500;letter-spacing:0.001px;">ArbID (out10-sig22)</div>
<div class="t" style="left:1133.5px;top:132.5px;color:#ffa500;letter-spacing:-0.134px;">Receive;Condition</div>
<div class="a" style="left:0px;top:155px;width:144.5px;height:30px;background:#000"></div>
<div class="a" style="left:65.5px;top:164px;width:12px;height:12px;background:#c9c9c9;border-radius:2.5px"></div>
<svg class="a" style="left:68px;top:167px" width="8" height="6" viewBox="0 0 8 6"><path d="M0.8 3l2 2 4-4.2" fill="none" stroke="#e9e9e9" stroke-width="1.1"/></svg>
<div class="a" style="left:0px;top:185px;width:144.5px;height:1px;background:#d0d0d0"></div>
<div class="a" style="left:144.5px;top:185px;width:1128.5px;height:1px;background:#e0e0e0"></div>
<div class="t" style="left:146.5px;top:163.5px;color:#ffa500;letter-spacing:-0.271px;">Signal - Map</div>
<div class="t" style="left:287.5px;top:157.5px;color:#ffa500;letter-spacing:-0.299px;">DW CAN 01 (GW to</div>
<div class="t" style="left:287.5px;top:170.5px;color:#ffa500;letter-spacing:-0.295px;">VividCAN) : CAN</div>
<div class="t" style="left:428.5px;top:163.5px;color:#ffa500;letter-spacing:-0.183px;">CANFD_11bti (in2)</div>
<div class="t" style="left:569.5px;top:163.5px;color:#ffa500;letter-spacing:-0.067px;">can.len</div>
<div class="t" style="left:710.5px;top:163.5px;color:#ffa500;letter-spacing:0.114px;">Ethernet : Ethernet</div>
<div class="t" style="left:851.5px;top:163.5px;color:#ffa500;letter-spacing:-0.272px;">TX_CAN1_StdFD (out10)</div>
<div class="t" style="left:992.5px;top:163.5px;color:#ffa500;letter-spacing:-0.192px;">LEN (out10-sig23)</div>
<div class="t" style="left:1133.5px;top:163.5px;color:#ffa500;letter-spacing:-0.134px;">Receive;Condition</div>
<div class="a" style="left:0px;top:186px;width:144.5px;height:30px;background:#000"></div>
<div class="a" style="left:65.5px;top:195px;width:12px;height:12px;background:#c9c9c9;border-radius:2.5px"></div>
<svg class="a" style="left:68px;top:198px" width="8" height="6" viewBox="0 0 8 6"><path d="M0.8 3l2 2 4-4.2" fill="none" stroke="#e9e9e9" stroke-width="1.1"/></svg>
<div class="a" style="left:0px;top:216px;width:144.5px;height:1px;background:#d0d0d0"></div>
<div class="a" style="left:144.5px;top:216px;width:1128.5px;height:1px;background:#e0e0e0"></div>
<div class="t" style="left:146.5px;top:194.5px;color:#ffa500;letter-spacing:-0.271px;">Signal - Map</div>
<div class="t" style="left:287.5px;top:188.5px;color:#ffa500;letter-spacing:-0.299px;">DW CAN 01 (GW to</div>
<div class="t" style="left:287.5px;top:201.5px;color:#ffa500;letter-spacing:-0.295px;">VividCAN) : CAN</div>
<div class="t" style="left:428.5px;top:194.5px;color:#ffa500;letter-spacing:-0.217px;">Xtd_CANFD_29bit (in3)</div>
<div class="t" style="left:569.5px;top:194.5px;color:#ffa500;letter-spacing:-0.028px;">can.arbid</div>
<div class="t" style="left:710.5px;top:194.5px;color:#ffa500;letter-spacing:0.114px;">Ethernet : Ethernet</div>
<div class="t" style="left:851.5px;top:194.5px;color:#ffa500;letter-spacing:-0.233px;">TX_CAN1_XtdFD (out11)</div>
<div class="t" style="left:992.5px;top:194.5px;color:#ffa500;letter-spacing:0.044px;">ArbID (out11-sig22)</div>
<div class="t" style="left:1133.5px;top:194.5px;color:#ffa500;letter-spacing:-0.134px;">Receive;Condition</div>
<div class="a" style="left:144px;top:0px;width:1px;height:214px;background:#dcdcdc"></div>
<div class="a" style="left:285px;top:0px;width:1px;height:214px;background:#dcdcdc"></div>
<div class="a" style="left:426px;top:0px;width:1px;height:214px;background:#dcdcdc"></div>
<div class="a" style="left:567px;top:0px;width:1px;height:214px;background:#dcdcdc"></div>
<div class="a" style="left:708px;top:0px;width:1px;height:214px;background:#dcdcdc"></div>
<div class="a" style="left:849px;top:0px;width:1px;height:214px;background:#dcdcdc"></div>
<div class="a" style="left:990px;top:0px;width:1px;height:214px;background:#dcdcdc"></div>
<div class="a" style="left:1131px;top:0px;width:1px;height:214px;background:#dcdcdc"></div>
</div>
<div class="btn" style="left:313.5px;top:436.5px;width:84px;height:29px;border-color:#bdbdbd;border-bottom-color:#9f9f9f"></div>
<div class="t" style="left:321px;top:439px;letter-spacing:-0.266px;">Reset Column</div>
<div class="t" style="left:342px;top:452px;transform:scaleX(0.9108);transform-origin:0 0;">Sizes</div>
<div class="btnd" style="left:401px;top:439px;width:17.5px;height:27px;background:#f4f4f4"></div>
<div class="btnd" style="left:422px;top:439px;width:17.5px;height:27px;background:#f4f4f4"></div>
<svg class="a" style="left:402px;top:444px" width="15" height="15" viewBox="0 0 15 15"><path d="M7.5 0.5l7 7h-3.7v6.5H4.2V7.5H0.5z" fill="#000"/></svg>
<svg class="a" style="left:423px;top:445px" width="15" height="15" viewBox="0 0 15 15"><path d="M7.5 14.5l7-7h-3.7V1H4.2v6.5H0.5z" fill="#000"/></svg>
<div class="a" style="left:1348px;top:435px;width:234.5px;height:31.5px;border:1px solid #8a8a8a;border-right-color:#fff;border-bottom-color:#fff;background:#f0f0f0"></div>
<div class="a" style="left:1590.5px;top:177px;width:1.5px;height:295px;background:#a6a6a6"></div>
<div class="a" style="left:1587px;top:177px;width:3.5px;height:294px;background:#f7f7f7"></div>
<div class="a" style="left:1592px;top:176px;width:303px;height:298px;background:#f0f0f0;border-style:solid;border-color:#fff #a0a0a0 #a0a0a0 #fff;border-width:2px 2px 3px 3.5px"></div>
<div class="t" style="left:1604.5px;top:181px;letter-spacing:0.077px;">Output Network</div>
<div class="a" style="left:1597px;top:197.5px;width:295px;height:19.5px;background:#fff;border-bottom:1px solid #777"></div>
<div class="t" style="left:1599px;top:201px;letter-spacing:-0.319px;">DW CAN 02 : CAN</div>
<svg class="a" style="left:1878.5px;top:204.5px" width="10" height="6" viewBox="0 0 10 6"><path d="M0.7 0.7l4.3 4.3 4.3-4.3" fill="none" stroke="#444" stroke-width="1.1"/></svg>
<div class="btnd" style="left:1603px;top:225px;width:51.5px;height:46px;"></div>
<div class="t" style="left:1611.5px;top:229px;color:#8a8a8a;letter-spacing:0.034px;">Set As</div>
<div class="t" style="left:1610.5px;top:242px;color:#8a8a8a;letter-spacing:0.246px;">Output</div>
<div class="t" style="left:1607.5px;top:255px;color:#8a8a8a;letter-spacing:0.094px;">Network</div>
<div class="t" style="left:1670.5px;top:223px;letter-spacing:-0.078px;">Sort By:</div>
<div class="a" style="left:1713.5px;top:221.5px;width:136px;height:20.5px;background:#fff;border:1px solid #d9d9d9;border-bottom-color:#c2c2c2;border-radius:3px"></div>
<div class="t" style="left:1716.5px;top:225.5px;transform:scaleX(0.9275);transform-origin:0 0;">Messages</div>
<svg class="a" style="left:1836px;top:228.5px" width="10" height="6" viewBox="0 0 10 6"><path d="M0.7 0.7l4.3 4.3 4.3-4.3" fill="none" stroke="#444" stroke-width="1.1"/></svg>
<div class="t" style="left:1670.5px;top:256px;letter-spacing:-0.35px;">Find</div>
<div class="a" style="left:1700px;top:254px;width:135px;height:20px;background:#fff;border-bottom:1px solid #8a8a8a;border-radius:2px"></div>
<div class="btn" style="left:1838.5px;top:255px;width:52px;height:19.5px;"></div>
<div class="t" style="left:1851.5px;top:258.5px;letter-spacing:-0.257px;">Clear</div>
<div class="a" style="left:1595px;top:282px;width:298px;height:150px;background:#fff"></div>
<svg class="a" style="left:1599px;top:286.5px" width="9" height="9" viewBox="0 0 9 9"><rect x="0.5" y="0.5" width="8" height="8" fill="#fff" stroke="#9a9a9a"/><path d="M2 4.5h5M4.5 2v5" stroke="#3a5fcd" stroke-width="1"/></svg>
<svg class="a" style="left:1613px;top:284px" width="15" height="14" viewBox="0 0 15 14"><rect x="2.5" y="0.75" width="10" height="7.5" fill="#fff" stroke="#000" stroke-width="1.3"/><rect x="5" y="2.8" width="5" height="3" fill="#49b000"/><path d="M1 10.2h13M1 13h13M1 10.2v2.8M14 10.2v2.8" stroke="#000" stroke-width="1.3" fill="none"/></svg>
<div class="t" style="left:1631.5px;top:285px;letter-spacing:-0.31px;">Tx Messages</div>
<div class="btnd" style="left:1602px;top:440.5px;width:77px;height:22px;"></div>
<div class="t" style="left:1606.5px;top:445.5px;color:#8a8a8a;letter-spacing:0.01px;">Set As Output</div>
<div class="btn" style="left:1802.5px;top:440.5px;width:83px;height:22px;border-color:#bdbdbd;border-bottom-color:#9f9f9f"></div>
<div class="t" style="left:1808.5px;top:445.5px;letter-spacing:-0.229px;">Swap Netwoks</div>
<div class="a" style="left:1905px;top:162px;width:4px;height:4px;background:#000;border-radius:50%"></div>
<div class="a" style="left:1895px;top:188px;width:25px;height:1px;background:#9a9a9a"></div>
<div class="a" style="left:1905px;top:212px;width:4px;height:4px;background:#000;border-radius:50%"></div>
<div class="a" style="left:1895px;top:238px;width:25px;height:1px;background:#9a9a9a"></div>
<div class="a" style="left:1905px;top:262px;width:4px;height:4px;background:#000;border-radius:50%"></div>
<div class="a" style="left:1895px;top:288px;width:25px;height:1px;background:#9a9a9a"></div>
<div class="a" style="left:1905px;top:312px;width:4px;height:4px;background:#000;border-radius:50%"></div>
<div class="a" style="left:1895px;top:338px;width:25px;height:1px;background:#9a9a9a"></div>
<div class="a" style="left:1905px;top:362px;width:4px;height:4px;background:#000;border-radius:50%"></div>
<div class="a" style="left:1895px;top:388px;width:25px;height:1px;background:#9a9a9a"></div>
<div class="a" style="left:1905px;top:412px;width:4px;height:4px;background:#000;border-radius:50%"></div>
<div class="a" style="left:1895px;top:438px;width:25px;height:1px;background:#9a9a9a"></div>
<div class="a" style="left:1905px;top:462px;width:4px;height:4px;background:#000;border-radius:50%"></div>
<div class="a" style="left:1895px;top:488px;width:25px;height:1px;background:#9a9a9a"></div>
<div class="a" style="left:1905px;top:512px;width:4px;height:4px;background:#000;border-radius:50%"></div>
<div class="a" style="left:1895px;top:538px;width:25px;height:1px;background:#9a9a9a"></div>
<div class="a" style="left:1905px;top:562px;width:4px;height:4px;background:#000;border-radius:50%"></div>
<div class="a" style="left:1895px;top:588px;width:25px;height:1px;background:#9a9a9a"></div>
<div class="a" style="left:1905px;top:612px;width:4px;height:4px;background:#000;border-radius:50%"></div>
<div class="a" style="left:1895px;top:638px;width:25px;height:1px;background:#9a9a9a"></div>
<div class="a" style="left:1905px;top:662px;width:4px;height:4px;background:#000;border-radius:50%"></div>
<div class="a" style="left:1895px;top:688px;width:25px;height:1px;background:#9a9a9a"></div>
<div class="a" style="left:0px;top:477px;width:1895px;height:24px;background:#fff"></div>
<div class="a" style="left:3px;top:480px;width:1891px;height:19px;background:#0078d7"></div>
<div class="t" style="left:787px;top:481.75px;font-size:13px;line-height:15px;font-weight:bold;color:#fff;letter-spacing:0.399px;">Setup Panel for Currently Selected Gateway Item</div>
<div class="a" style="left:1px;top:501px;width:1891.5px;height:242.5px;border:2px solid #a0a0a0;border-left-width:1px;border-right-color:#868686;border-bottom-color:#868686;background:#f0f0f0"></div>
<div class="a" style="left:2px;top:503px;width:1888.5px;height:238.5px;border-top:1px solid #696969;border-left:1px solid #696969;box-shadow:inset 2px 2px 0 #fff"></div>
<div class="a" style="left:1894px;top:501px;width:1px;height:245px;background:#b4b4b4"></div>
<div class="a" style="left:1px;top:745px;width:1894px;height:1px;background:#b4b4b4"></div>
<div class="t" style="left:749px;top:512.5px;font-size:15px;line-height:17px;font-weight:bold;font-family:&quot;Liberation Serif&quot;,serif;letter-spacing:-0.272px;">Input</div>
<div class="t" style="left:1211.5px;top:512.5px;font-size:15px;line-height:17px;font-weight:bold;font-family:&quot;Liberation Serif&quot;,serif;letter-spacing:-0.281px;">Output</div>
<div class="t" style="left:879px;top:518.5px;letter-spacing:-0.081px;">Type:</div>
<div class="a" style="left:913px;top:513px;width:150.5px;height:19.5px;border:1px solid #7a7a7a;border-top-color:#9c9c9c;border-left-color:#9c9c9c;background:#f0f0f0"></div>
<div class="t" style="left:957.5px;top:516.5px;color:#0000ee;letter-spacing:-0.229px;">Signal - Map</div>
<div class="t" style="left:1423px;top:518.5px;font-weight:bold;color:#ffa500;letter-spacing:0.345px;">Warning</div>
<svg class="a" style="left:1472.5px;top:516.5px" width="16" height="16" viewBox="0 0 16 16"><circle cx="8" cy="8" r="7.5" fill="#000"/><circle cx="8" cy="8" r="6.1" fill="none" stroke="#fff" stroke-width="0.7"/></svg>
<div class="t" style="left:541.5px;top:551px;letter-spacing:0.013px;">Network:</div>
<div class="a" style="left:590px;top:547px;width:347px;height:19.5px;border:1px solid #5e5e5e;border-top-color:#8c8c8c;border-left-color:#8c8c8c;background:#f0f0f0"></div>
<div class="t" style="left:675px;top:551.5px;letter-spacing:-0.29px;">DW CAN 01 (GW to VividCAN) : CAN</div>
<div class="t" style="left:975.5px;top:551px;letter-spacing:0.013px;">Network:</div>
<div class="a" style="left:1025px;top:547px;width:446.5px;height:19.5px;border:1px solid #5e5e5e;border-top-color:#8c8c8c;border-left-color:#8c8c8c;background:#f0f0f0"></div>
<div class="t" style="left:1200px;top:551.5px;letter-spacing:0.114px;">Ethernet : Ethernet</div>
<div class="a" style="left:536px;top:576px;width:417px;height:31px;background:#fff;border-top:1px solid #8a8a8a;border-left:1px solid #8a8a8a"></div>
<div class="t" style="left:712.5px;top:581.5px;color:#ffa500;letter-spacing:-0.084px;">can.arbid</div>
<div class="a" style="left:939.5px;top:586px;width:0;height:0;border-left:4px solid transparent;border-right:4px solid transparent;border-top:4px solid #000"></div>
<div class="a" style="left:970px;top:576px;width:517px;height:31px;background:#fff;border-top:1px solid #8a8a8a;border-left:1px solid #8a8a8a"></div>
<div class="t" style="left:1168.5px;top:581.5px;color:#ffa500;letter-spacing:0.007px;">ArbID (out8-sig22)</div>
<div class="a" style="left:1461px;top:586px;width:0;height:0;border-left:4px solid transparent;border-right:4px solid transparent;border-top:4px solid #000"></div>
<div class="t" style="left:1476px;top:581px;font-size:11.5px;line-height:13.5px;font-weight:bold;color:#8a8a8a;letter-spacing:0.104px;">x</div>
<div class="cb" style="left:536px;top:621.5px;width:12.5px;height:12.5px;"></div>
<div class="t" style="left:552px;top:621.5px;color:#6a6a6a;letter-spacing:-0.137px;">Ignore Tx Messages</div>
<div class="cb" style="left:535px;top:649.5px;width:12.5px;height:12.5px;"></div>
<div class="t" style="left:550.5px;top:649.5px;color:#6a6a6a;letter-spacing:-0.134px;">Expression:</div>
<div class="t" style="left:641px;top:646px;color:#a0a0a0;letter-spacing:0.038px;">Protection:</div>
<div class="a" style="left:696.5px;top:638px;width:179px;height:19.5px;background:#f9f9f9;border:1px solid #f0f0f0;border-radius:3px"></div>
<div class="t" style="left:699.5px;top:641.5px;color:#6d6d6d;letter-spacing:-0.324px;">None</div>
<svg class="a" style="left:862px;top:646px" width="10" height="6" viewBox="0 0 10 6"><path d="M0.7 0.7l4.3 4.3 4.3-4.3" fill="none" stroke="#a5a5a5" stroke-width="1"/></svg>
<div class="a" style="left:535px;top:670px;width:307px;height:21px;background:#fff"></div>
<div class="btnd" style="left:850px;top:670.3px;width:25.5px;height:21.4px;background:#f7f7f7;border-color:#e6e6e6;border-radius:4px"></div>
<div class="t" style="left:857px;top:672.2px;font-family:&quot;Liberation Serif&quot;,serif;font-style:italic;font-weight:bold;font-size:14.5px;line-height:16px">f<span style="font-size:10.5px;position:relative;top:0.3px;left:0.3px;letter-spacing:0">x</span></div>
<div class="a" style="left:882px;top:618px;width:71px;height:72px;border:1px solid #dcdcdc"></div>
<div class="a" style="left:888px;top:612px;width:32px;height:13px;background:#f0f0f0"></div>
<div class="t" style="left:890px;top:612.5px;letter-spacing:-0.262px;">Action</div>
<div class="rad" style="left:886.8px;top:627.5px;width:12.8px;height:12.8px;"></div>
<div class="t" style="left:902.5px;top:627.5px;color:#6a6a6a;letter-spacing:-0.049px;">Forward</div>
<div class="rad" style="left:886.8px;top:650.5px;width:12.8px;height:12.8px;"></div>
<div class="t" style="left:902.5px;top:650.5px;color:#6a6a6a;letter-spacing:-0.466px;">Map</div>
<div class="rad" style="left:886.8px;top:673px;width:12.8px;height:12.8px;"></div>
<div class="t" style="left:902.5px;top:673px;color:#6a6a6a;letter-spacing:-0.133px;">Trigger</div>
<div class="a" style="left:886.8px;top:650.5px;width:12.8px;height:12.8px;background:#c6c6c6;border-radius:50%"></div>
<div class="a" style="left:890.7px;top:654.4px;width:5px;height:5px;background:#fafafa;border-radius:50%"></div>
<div class="cb" style="left:535px;top:700px;width:12.5px;height:12.5px;"></div>
<div class="t" style="left:550.5px;top:700.5px;color:#6a6a6a;letter-spacing:-0.195px;">Min:</div>
<div class="a" style="left:574px;top:697px;width:127px;height:20.5px;background:#fff"></div>
<div class="btnd" style="left:709.5px;top:696.8px;width:25.5px;height:21.9px;background:#f7f7f7;border-color:#e6e6e6;border-radius:4px"></div>
<div class="t" style="left:716.5px;top:698.7px;font-family:&quot;Liberation Serif&quot;,serif;font-style:italic;font-weight:bold;font-size:14.5px;line-height:16px">f<span style="font-size:10.5px;position:relative;top:0.3px;left:0.3px;letter-spacing:0">x</span></div>
<div class="cb" style="left:748px;top:700px;width:12.5px;height:12.5px;"></div>
<div class="t" style="left:763.5px;top:700.5px;color:#6a6a6a;transform:scaleX(0.9229);transform-origin:0 0;">Max:</div>
<div class="a" style="left:791px;top:697px;width:127px;height:20.5px;background:#fff"></div>
<div class="btnd" style="left:926.5px;top:696.8px;width:25.5px;height:21.9px;background:#f7f7f7;border-color:#e6e6e6;border-radius:4px"></div>
<div class="t" style="left:933.5px;top:698.7px;font-family:&quot;Liberation Serif&quot;,serif;font-style:italic;font-weight:bold;font-size:14.5px;line-height:16px">f<span style="font-size:10.5px;position:relative;top:0.3px;left:0.3px;letter-spacing:0">x</span></div>
<div class="cb" style="left:970.5px;top:622.5px;width:12.5px;height:12.5px;"></div>
<div class="t" style="left:985.5px;top:622.5px;color:#6a6a6a;letter-spacing:-0.11px;">Pad short frames</div>
<div class="cb" style="left:1074.5px;top:622.5px;width:12.5px;height:12.5px;"></div>
<div class="t" style="left:1089.5px;top:622.5px;color:#6a6a6a;letter-spacing:-0.227px;">Enable Automatic Checksum Updating</div>
<div class="t" style="left:1280px;top:623.5px;color:#a0a0a0;letter-spacing:0.019px;">Type:</div>
<div class="a" style="left:1311px;top:614.5px;width:178px;height:20px;background:#f9f9f9;border:1px solid #f2f2f2;border-radius:3px"></div>
<svg class="a" style="left:1476px;top:622.5px" width="10" height="6" viewBox="0 0 10 6"><path d="M0.7 0.7l4.3 4.3 4.3-4.3" fill="none" stroke="#b5b5b5" stroke-width="1"/></svg>
<div class="a" style="left:970px;top:648.5px;width:520px;height:72.5px;border:1px solid #dcdcdc"></div>
<div class="a" style="left:975.5px;top:642px;width:77px;height:13px;background:#f0f0f0"></div>
<div class="t" style="left:977.5px;top:642.5px;letter-spacing:0.012px;">Output Triggers</div>
<div class="a" style="left:1090px;top:646px;width:78px;height:6px;background:#f0f0f0"></div>
<div class="a" style="left:1298px;top:646px;width:68px;height:6px;background:#f0f0f0"></div>
<div class="a" style="left:974px;top:660.5px;width:59px;height:18.5px;background:#f9f9f9;border:1px solid #f2f2f2;border-radius:3px"></div>
<div class="t" style="left:976.5px;top:663.5px;color:#6d6d6d;letter-spacing:-0.177px;">Receive</div>
<svg class="a" style="left:1020px;top:668px" width="10" height="6" viewBox="0 0 10 6"><path d="M0.7 0.7l4.3 4.3 4.3-4.3" fill="none" stroke="#a5a5a5" stroke-width="1"/></svg>
<div class="a" style="left:1039.5px;top:655.5px;width:2px;height:32px;border-left:1px solid #8a8a8a;border-top:1px solid #8a8a8a;border-bottom:1px solid #8a8a8a;box-shadow:1px 0 0 #fff"></div>
<div class="cb" style="left:1046px;top:662px;width:12.5px;height:12.5px;"></div>
<div class="t" style="left:1061.5px;top:655.5px;color:#6a6a6a;letter-spacing:-0.187px;">Use</div>
<div class="t" style="left:1061.5px;top:668.5px;color:#6a6a6a;letter-spacing:-0.059px;">Rate</div>
<div class="cb" style="left:1090.5px;top:663.5px;width:12.5px;height:12.5px;"></div>
<div class="t" style="left:1106px;top:650.5px;color:#6a6a6a;letter-spacing:-0.172px;">Transmit</div>
<div class="t" style="left:1106px;top:663.5px;color:#6a6a6a;letter-spacing:0.075px;">only after</div>
<div class="t" style="left:1106px;top:676.5px;color:#6a6a6a;letter-spacing:0.08px;">first trigger</div>
<div class="a" style="left:1169.5px;top:659px;width:39.5px;height:19px;background:#fff"></div>
<div class="t" style="left:1190px;top:662px;color:#6d6d6d;transform:scaleX(0.899);transform-origin:0 0;">100</div>
<div class="t" style="left:1210.5px;top:668.5px;color:#a0a0a0;transform:scaleX(0.8866);transform-origin:0 0;">ms</div>
<div class="cbk" style="left:1230px;top:664.5px;width:12.5px;height:12.5px;"></div>
<svg class="a" style="left:1232.5px;top:667.5px" width="8" height="6" viewBox="0 0 8 6"><path d="M0.8 3l2 2 4-4.2" fill="none" stroke="#e4e4e4" stroke-width="1.1"/></svg>
<div class="t" style="left:1245.5px;top:652.5px;color:#6a6a6a;letter-spacing:-0.187px;">Use</div>
<div class="t" style="left:1245.5px;top:665.5px;color:#6a6a6a;transform:scaleX(0.9298);transform-origin:0 0;">Message</div>
<div class="t" style="left:1245.5px;top:678.5px;color:#6a6a6a;letter-spacing:-0.059px;">Rate</div>
<div class="a" style="left:1292.5px;top:655.5px;width:2px;height:32px;border-left:1px solid #8a8a8a;border-top:1px solid #8a8a8a;border-bottom:1px solid #8a8a8a;box-shadow:1px 0 0 #fff"></div>
<div class="cb" style="left:1298px;top:662.5px;width:12.5px;height:12.5px;"></div>
<div class="t" style="left:1313.5px;top:649.5px;color:#6a6a6a;letter-spacing:-0.172px;">Transmit</div>
<div class="t" style="left:1313.5px;top:662.5px;color:#6a6a6a;letter-spacing:-0.059px;">only when</div>
<div class="t" style="left:1313.5px;top:675.5px;color:#6a6a6a;letter-spacing:-0.015px;">full</div>
<div class="cb" style="left:1372.5px;top:661.5px;width:12.5px;height:12.5px;"></div>
<div class="t" style="left:1388px;top:661.5px;color:#6a6a6a;letter-spacing:-0.11px;">Timeout:</div>
<div class="a" style="left:1433px;top:659px;width:39px;height:19px;background:#fff"></div>
<div class="t" style="left:1453px;top:662px;color:#6d6d6d;transform:scaleX(0.899);transform-origin:0 0;">100</div>
<div class="t" style="left:1473.5px;top:666.5px;color:#a0a0a0;transform:scaleX(0.8866);transform-origin:0 0;">ms</div>
<div class="cbk" style="left:978px;top:699.5px;width:12.5px;height:12.5px;"></div>
<svg class="a" style="left:980.5px;top:702.5px" width="8" height="6" viewBox="0 0 8 6"><path d="M0.8 3l2 2 4-4.2" fill="none" stroke="#e4e4e4" stroke-width="1.1"/></svg>
<div class="t" style="left:993.5px;top:699.5px;color:#6a6a6a;letter-spacing:-0.103px;">Condition:</div>
<div class="a" style="left:1046px;top:696px;width:405px;height:21px;background:#fff"></div>
<div class="t" style="left:1046.5px;top:698.5px;color:#6d6d6d;letter-spacing:0.025px;">not({(Message Is Tx Msg) :in0-27})</div>
<div class="btnd" style="left:1456.5px;top:695.3px;width:25.5px;height:21.4px;background:#f7f7f7;border-color:#e6e6e6;border-radius:4px"></div>
<div class="t" style="left:1463.5px;top:697.2px;font-family:&quot;Liberation Serif&quot;,serif;font-style:italic;font-weight:bold;font-size:14.5px;line-height:16px">f<span style="font-size:10.5px;position:relative;top:0.3px;left:0.3px;letter-spacing:0">x</span></div>
<div class="a" style="left:0px;top:772.5px;width:1895px;height:2.5px;background:#f7f7f7"></div>
<div class="a" style="left:2px;top:752.5px;width:99.5px;height:20px;background:#f0f0f0;border:1px solid #e4e4e4;border-bottom:none"></div>
<div class="a" style="left:101.5px;top:750.5px;width:140px;height:22.5px;background:#f8f8f8;border:1px solid #e9e9e9;border-bottom:none"></div>
<svg class="a" style="left:6px;top:755px" width="16" height="14" viewBox="0 0 16 14"><rect x="3" y="0.75" width="9" height="7" fill="#fff" stroke="#000" stroke-width="1.3"/><rect x="5.3" y="2.7" width="4.4" height="2.8" fill="#49b000"/><path d="M1 10.2h13.5M1 13h13.5M1 10.2v2.8M14.5 10.2v2.8" stroke="#000" stroke-width="1.3" fill="none"/></svg>
<div class="t" style="left:29.5px;top:755.5px;font-size:12.5px;line-height:14.5px;transform:scaleX(0.8514);transform-origin:0 0;">Tx Panel</div>
<div class="a" style="left:75.5px;top:756px;width:23px;height:13.5px;background:linear-gradient(#e2e8f1 0%,#d0d9e6 50%,#c3cedd 100%);border:1px solid #8fa3c2;border-radius:2.5px"></div>
<svg class="a" style="left:80.5px;top:757.75px" width="13" height="10" viewBox="0 0 13 10"><path d="M2 1.2l9 7.6M11 1.2l-9 7.6" stroke="#4f5a6a" stroke-width="4.4"/><path d="M2 1.2l9 7.6M11 1.2l-9 7.6" stroke="#fff" stroke-width="2.2"/></svg>
<svg class="a" style="left:107px;top:753px" width="16" height="15" viewBox="0 0 16 15"><path d="M1 3.5h2M1 7h2M1 10.5h2" stroke="#000" stroke-width="1.6"/><path d="M6 5.5C7 2 12 1 14.5 3.5" fill="none" stroke="#000" stroke-width="1.1"/><path d="M10 5l3-2.5" stroke="#d22" stroke-width="1"/><rect x="5.6" y="6.6" width="9" height="7.5" fill="#fff" stroke="#000" stroke-width="1.2"/><rect x="7.5" y="9.5" width="5.2" height="3.3" fill="#49b000"/></svg>
<div class="t" style="left:130px;top:754.5px;font-size:12.5px;line-height:14.5px;transform:scaleX(0.8457);transform-origin:0 0;">Graphical Panels</div>
<div class="a" style="left:214.5px;top:754px;width:23px;height:13.5px;background:linear-gradient(#e2e8f1 0%,#d0d9e6 50%,#c3cedd 100%);border:1px solid #8fa3c2;border-radius:2.5px"></div>
<svg class="a" style="left:219.5px;top:755.75px" width="13" height="10" viewBox="0 0 13 10"><path d="M2 1.2l9 7.6M11 1.2l-9 7.6" stroke="#4f5a6a" stroke-width="4.4"/><path d="M2 1.2l9 7.6M11 1.2l-9 7.6" stroke="#fff" stroke-width="2.2"/></svg>
<div class="a" style="left:0px;top:775px;width:1894.5px;height:249px;background:#c0c0c0;border:1px solid #000"></div>
<div class="a" style="left:29px;top:818px;width:280px;height:52px;background:#c0c0c0;border:2px solid #7d7d7d;border-right-color:#fff;border-bottom-color:#fff"></div>
<div class="t" style="left:45px;top:823px;font-size:36px;line-height:38px;font-family:&quot;Liberation Serif&quot;,serif;letter-spacing:1.231px;line-height:40px;">TXing on AE01</div>
<div class="a" style="left:23px;top:913.5px;width:899.5px;height:67.5px;background:#fff;border:1px solid #7a7a7a;border-right-color:#fff;border-bottom-color:#fff;border-bottom-width:2px"></div>
<div class="a" style="left:24px;top:914.5px;width:346px;height:64.5px;background:linear-gradient(17.7deg,rgba(255,255,255,0) 0%,rgba(255,255,255,0) 66%,rgba(255,255,255,0.1) 69%,rgba(255,255,255,0.04) 100%),linear-gradient(90deg,rgba(36,36,255,0) 64%,rgba(36,36,255,0.3) 87%,rgba(30,30,255,0.85) 100%),linear-gradient(180deg,#aeaeff 0%,#9c9cff 25%,#8686ff 50%,#6868ff 72%,#3c3cff 90%,#1818ff 100%)"></div>
<div class="a" style="left:370px;top:915px;width:10px;height:64px;background:#fff;border:1px solid #000;border-width:1.5px"></div>
<div class="t" style="left:395px;top:916px;font-size:10px;line-height:12px;letter-spacing:0.153px;">{Brightness (Value) :in136-sig0-0}</div>
<div class="t" style="left:458px;top:926px;font-size:10px;line-height:12px;letter-spacing:0.129px;">100 %</div>
<div class="a" style="left:947.5px;top:913.5px;width:899.5px;height:67.5px;background:#fff;border:1px solid #7a7a7a;border-right-color:#fff;border-bottom-color:#fff;border-bottom-width:2px"></div>
<div class="a" style="left:948.5px;top:914.5px;width:346.5px;height:64.5px;background:linear-gradient(17.7deg,rgba(255,255,255,0) 0%,rgba(255,255,255,0) 66%,rgba(255,255,255,0.1) 69%,rgba(255,255,255,0.04) 100%),linear-gradient(90deg,rgba(255,36,128,0) 64%,rgba(255,36,128,0.3) 87%,rgba(255,30,124,0.85) 100%),linear-gradient(180deg,#ffb4c9 0%,#ffa3be 25%,#ff8db0 50%,#ff6f9e 72%,#ff4089 90%,#ff1878 100%)"></div>
<div class="a" style="left:1295px;top:915px;width:10px;height:64px;background:#fff;border:1px solid #000;border-width:1.5px"></div>
<div class="t" style="left:1320px;top:916px;font-size:10px;line-height:12px;letter-spacing:0.153px;">{Brightness (Value) :in136-sig0-0}</div>
<div class="t" style="left:1383px;top:926px;font-size:10px;line-height:12px;letter-spacing:0.129px;">100 %</div>
<div class="a" style="left:0px;top:1024px;width:1895px;height:8px;background:#f0f0f0"></div>
<div class="a" style="left:0px;top:1024px;width:1895px;height:1.5px;background:#f8f8f8"></div>
<div class="a" style="left:2px;top:1025.5px;width:93px;height:8px;background:#eeeeee;border:1px solid #e4e4e4"></div>
<div class="a" style="left:95px;top:1025.5px;width:56.5px;height:8px;background:#f8f8f8;border:1px solid #e2e2e2"></div>
<div class="a" style="left:130.8px;top:1030.5px;width:1.8px;height:2px;background:#223"></div>
<div class="a" style="left:1742px;top:1025.5px;width:21.5px;height:10px;background:#f6f6f6;border:1px solid #e6e6e6;border-radius:4px"></div>
<div class="a" style="left:1767px;top:1025.5px;width:21.5px;height:10px;background:#f6f6f6;border:1px solid #e6e6e6;border-radius:4px"></div>
<div class="a" style="left:1792px;top:1025.5px;width:21.5px;height:10px;background:#f6f6f6;border:1px solid #e6e6e6;border-radius:4px"></div>
<div class="a" style="left:1816px;top:1025.5px;width:21.5px;height:10px;background:#fdfdfd;border:1px solid #cfcfcf;border-radius:4px"></div>
<div class="a" style="left:1840px;top:1025.5px;width:21.5px;height:10px;background:#fdfdfd;border:1px solid #dcdcdc;border-radius:4px"></div>
<div class="a" style="left:1863.5px;top:1025.5px;width:21.5px;height:10px;background:#cfe4f7;border:1px solid #0a64b4;border-radius:4px"></div>
<div class="a" style="left:1823px;top:1030px;width:10px;height:3px;background:#000"></div>
<div class="a" style="left:1847px;top:1030px;width:10px;height:3px;background:#101070"></div>
<div class="a" style="left:1873px;top:1030.5px;width:2px;height:2px;background:#101070"></div>
<div class="a" style="left:1894px;top:1024px;width:1.5px;height:8px;background:#8a8a8a"></div>
</body></html>
